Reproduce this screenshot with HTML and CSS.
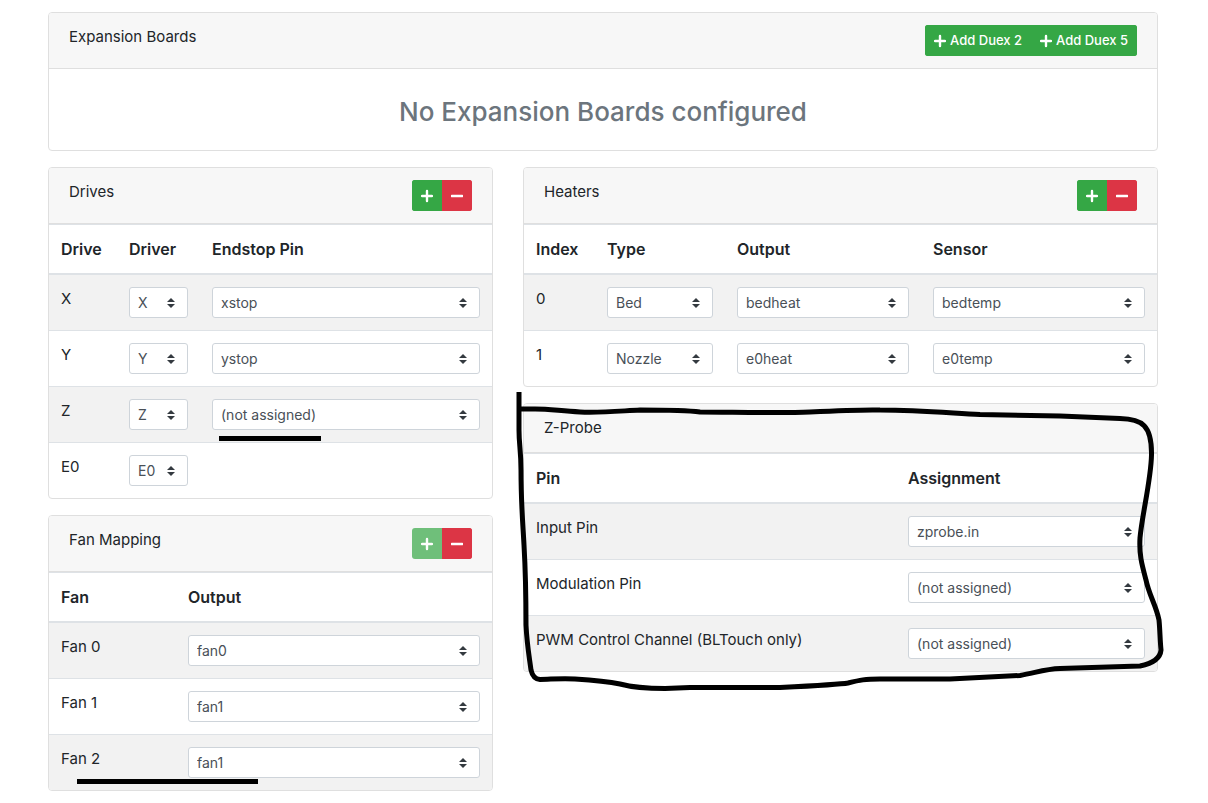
FILE: index.html
```html
<!DOCTYPE html>
<html lang="en">
<head>
<meta charset="utf-8">
<title>Expansion Boards</title>
<meta name="viewport" content="width=device-width, initial-scale=1">
<link rel="stylesheet" href="styles.css">
</head>
<body>
<svg class="defs" aria-hidden="true">
  <symbol id="plus" viewBox="0 0 12 14"><path d="M6 2v10M1 7h10" stroke="currentColor" stroke-width="2.400" stroke-linecap="round"/></symbol>
  <symbol id="minus" viewBox="0 0 12 14"><path d="M.8 7h10.400" stroke="currentColor" stroke-width="2.400" stroke-linecap="round"/></symbol>
</svg>
<main class="page">
  <section class="card">
    <header class="card-header">
      <h2 class="card-title">Expansion Boards</h2>
      <div class="btn-group">
        <button type="button" class="btn btn-success"><svg class="icon"><use href="#plus"/></svg>Add Duex 2</button>
        <button type="button" class="btn btn-success"><svg class="icon"><use href="#plus"/></svg>Add Duex 5</button>
      </div>
    </header>
    <p class="empty">No Expansion Boards configured</p>
  </section>

  <div class="row">
    <div class="col">
      <section class="card">
        <header class="card-header">
          <h2 class="card-title">Drives</h2>
          <div class="btn-group">
            <button type="button" class="btn btn-success" aria-label="Add drive"><svg class="icon"><use href="#plus"/></svg></button>
            <button type="button" class="btn btn-danger" aria-label="Remove drive"><svg class="icon"><use href="#minus"/></svg></button>
          </div>
        </header>
        <table class="table">
          <colgroup><col class="w-drive"><col class="w-driver"><col></colgroup>
          <thead><tr><th>Drive</th><th>Driver</th><th>Endstop Pin</th></tr></thead>
          <tbody>
            <tr><td>X</td><td><select class="select" aria-label="Driver for X"><option>X</option></select></td><td><select class="select" aria-label="Endstop pin for X"><option>xstop</option></select></td></tr>
            <tr><td>Y</td><td><select class="select" aria-label="Driver for Y"><option>Y</option></select></td><td><select class="select" aria-label="Endstop pin for Y"><option>ystop</option></select></td></tr>
            <tr><td>Z</td><td><select class="select" aria-label="Driver for Z"><option>Z</option></select></td><td><select class="select" aria-label="Endstop pin for Z"><option>(not assigned)</option></select></td></tr>
            <tr><td>E0</td><td><select class="select" aria-label="Driver for E0"><option>E0</option></select></td><td></td></tr>
          </tbody>
        </table>
      </section>

      <section class="card">
        <header class="card-header">
          <h2 class="card-title">Fan Mapping</h2>
          <div class="btn-group">
            <button type="button" class="btn btn-success" aria-label="Add fan" disabled><svg class="icon"><use href="#plus"/></svg></button>
            <button type="button" class="btn btn-danger" aria-label="Remove fan"><svg class="icon"><use href="#minus"/></svg></button>
          </div>
        </header>
        <table class="table">
          <colgroup><col class="w-fan"><col></colgroup>
          <thead><tr><th>Fan</th><th>Output</th></tr></thead>
          <tbody>
            <tr><td>Fan 0</td><td><select class="select" aria-label="Output for Fan 0"><option>fan0</option></select></td></tr>
            <tr><td>Fan 1</td><td><select class="select" aria-label="Output for Fan 1"><option>fan1</option></select></td></tr>
            <tr><td>Fan 2</td><td><select class="select" aria-label="Output for Fan 2"><option>fan1</option></select></td></tr>
          </tbody>
        </table>
      </section>
    </div>

    <div class="col">
      <section class="card">
        <header class="card-header">
          <h2 class="card-title">Heaters</h2>
          <div class="btn-group">
            <button type="button" class="btn btn-success" aria-label="Add heater"><svg class="icon"><use href="#plus"/></svg></button>
            <button type="button" class="btn btn-danger" aria-label="Remove heater"><svg class="icon"><use href="#minus"/></svg></button>
          </div>
        </header>
        <table class="table">
          <colgroup><col class="w-index"><col class="w-type"><col class="w-output"><col></colgroup>
          <thead><tr><th>Index</th><th>Type</th><th>Output</th><th>Sensor</th></tr></thead>
          <tbody>
            <tr><td>0</td><td><select class="select" aria-label="Type of heater 0"><option>Bed</option></select></td><td><select class="select" aria-label="Output of heater 0"><option>bedheat</option></select></td><td><select class="select" aria-label="Sensor of heater 0"><option>bedtemp</option></select></td></tr>
            <tr><td>1</td><td><select class="select" aria-label="Type of heater 1"><option>Nozzle</option></select></td><td><select class="select" aria-label="Output of heater 1"><option>e0heat</option></select></td><td><select class="select" aria-label="Sensor of heater 1"><option>e0temp</option></select></td></tr>
          </tbody>
        </table>
      </section>

      <section class="card">
        <header class="card-header">
          <h2 class="card-title">Z-Probe</h2>
        </header>
        <table class="table">
          <colgroup><col class="w-pin"><col></colgroup>
          <thead><tr><th>Pin</th><th>Assignment</th></tr></thead>
          <tbody>
            <tr><td>Input Pin</td><td><select class="select" aria-label="Input Pin"><option>zprobe.in</option></select></td></tr>
            <tr><td>Modulation Pin</td><td><select class="select" aria-label="Modulation Pin"><option>(not assigned)</option></select></td></tr>
            <tr><td>PWM Control Channel (BLTouch only)</td><td><select class="select" aria-label="PWM Control Channel"><option>(not assigned)</option></select></td></tr>
          </tbody>
        </table>
      </section>
    </div>
  </div>
</main>

<svg class="markup" width="1208" height="803" viewBox="0 0 1208 803" aria-hidden="true">
  <path d="M219 436h102v5H219zM77 779h181v5H77z"/>
  <path fill="none" stroke="#000" stroke-width="5" stroke-linejoin="round" d="M519 392V430C519 445 521 450 521 470C521 505 523 525 524 545C526 580 526 590 526 625C527 645 529 655 531 670Q533 679 540 679.500C550 679.500 560 678 575 679C590 680 605 681 620 684C635 688 650 688.500 665 688.500L690 687.500L780 687.500C810 686 840 684.500 848 683C860 680 865 679 880 679L950 679L1020 675.500C1035 673 1045 669 1060 668.500L1140 666Q1160 662 1161 650C1160 640 1160 630 1159 620C1156 605 1149 595 1146 580C1142 565 1139 555 1140 538C1142 515 1151 480 1151.500 455C1152 425 1142 419 1120 418.500L1060 416L980 414.500C950 413 920 410 880 410C860 409.500 830 411 810 412C780 413.500 730 412 700 412C685 410 670 410 640 410C620 411 600 413 580 412C560 411 550 409 535 409H517"/>
</svg>
</body>
</html>
```
FILE: styles.css
```css
*, *::before, *::after { box-sizing: border-box; }

body {
  margin: 0;
  position: relative;
  background: #fff;
  color: #212529;
  font: 400 15px/24px Inter, "Liberation Sans", sans-serif;
}

.defs { position: absolute; width: 0; height: 0; }

.page { padding: 12px 50px 0 48px; }

.row {
  display: grid;
  grid-template-columns: minmax(0, 5fr) minmax(0, 7fr);
  margin: 0 -15px;
}

.col { padding: 0 15px; }

.card {
  margin-bottom: 16px;
  border: 1px solid #dfdfdf;
  border-radius: 4px;
  overflow: hidden;
}

.col .card:last-child { margin-bottom: 12px; }

.card-header {
  display: flex;
  justify-content: space-between;
  align-items: flex-start;
  padding: 12px 20px;
  background: #f7f7f7;
  border-bottom: 1px solid #dfdfdf;
}

.card-title { margin: 0; font-size: 15px; font-weight: 400; }

.empty {
  margin: 0;
  padding: 26px 20px 22px;
  color: #6c757d;
  font-size: 26px;
  font-weight: 500;
  line-height: 33px;
  text-align: center;
}

.btn-group { display: flex; border-radius: 3px; overflow: hidden; }

.btn {
  display: inline-flex;
  align-items: center;
  gap: 4px;
  height: 31px;
  padding: 4px 8px;
  border: 1px solid transparent;
  color: #fff;
  font: 500 13px/21px Inter, "Liberation Sans", sans-serif;
}

.btn-success { background: #35a745; border-color: #35a745; }
.btn-danger { background: #dc3545; border-color: #dc3545; }
.btn:disabled { opacity: .7; }

.icon { width: 12px; height: 14px; fill: none; }

.table {
  width: 100%;
  table-layout: fixed;
  border-collapse: separate;
  border-spacing: 0;
}

.table th, .table td {
  padding: 12px;
  border-top: 1px solid #dee2e6;
  text-align: left;
  vertical-align: top;
}

.table th { border-bottom: 2px solid #dee2e6; font-size: 16px; font-weight: 600; }
.table tbody tr:first-child td { border-top: 0; }
.table tbody tr:nth-child(odd) { background: #f2f2f2; }

.w-drive { width: 68px; }
.w-driver { width: 83px; }
.w-fan { width: 127px; }
.w-index { width: 71px; }
.w-type { width: 130px; }
.w-output { width: 196px; }
.w-pin { width: 372px; }

.select {
  display: block;
  width: 100%;
  height: 31px;
  padding: 4px 28px 4px 8px;
  border: 1px solid #ced4da;
  border-radius: 3px;
  appearance: none;
  background: #fff url("data:image/svg+xml,%3Csvg xmlns='http://www.w3.org/2000/svg' viewBox='0 0 4 5'%3E%3Cpath fill='%23343a40' d='M2 0L0 2h4zm0 5L0 3h4z'/%3E%3C/svg%3E") no-repeat right 12px center / 8px 10px;
  color: #495057;
  font: 400 14px/21px Inter, "Liberation Sans", sans-serif;
}

.markup { position: absolute; top: 0; left: 0; pointer-events: none; }
```
